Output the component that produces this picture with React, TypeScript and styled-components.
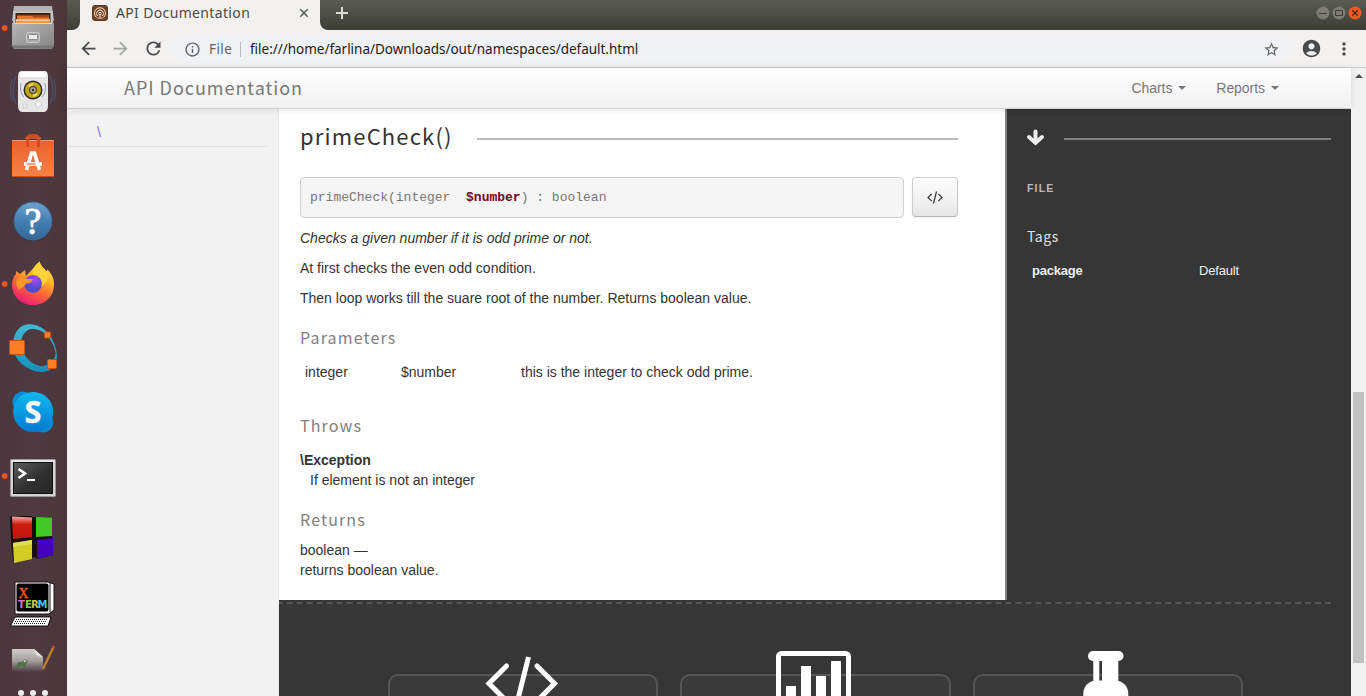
import React from 'react';
import styled, { createGlobalStyle } from 'styled-components';
import {
  MdArrowBack,
  MdArrowForward,
  MdRefresh,
  MdInfoOutline,
  MdStarBorder,
  MdAccountCircle,
  MdMoreVert,
} from 'react-icons/md';

const sans = `'Liberation Sans', Arial, sans-serif`;
const heading = `'Noto Sans CJK SC', 'Noto Sans', sans-serif`;
const chrome = `'Noto Sans', 'Open Sans', sans-serif`;

const GlobalStyle = createGlobalStyle`
  * { box-sizing: border-box; }
  body { margin: 0; font: 14px/20px ${sans}; color: #333; overflow: hidden; }
  h1, h3, h4, h5, p, pre, dl, dd { margin: 0; font-weight: normal; }
  svg { display: block; flex: none; }
`;

const Desktop = styled.div`
  display: flex;
  width: 1366px;
  height: 696px;
  overflow: hidden;
`;

/* ---------- launcher ---------- */

const Dock = styled.aside`
  width: 67px;
  flex: none;
  height: 696px;
  overflow: hidden;
  background: linear-gradient(90deg, #4a363c, #4e3a40 50%, #4b353b);
`;

const DockList = styled.div`
  display: flex;
  flex-direction: column;
  margin-top: -4px;
`;

const DockSlot = ({ index, running, children }: { index: number; running?: boolean; children: React.ReactNode }) => (
  <svg width="67" height="64" viewBox={`0 ${index * 64 - 4} 67 64`}>
    {running && <circle cx="4.700" cy={index * 64 + 28} r="2.900" fill="#e95420" />}
    {children}
  </svg>
);

const Launcher = () => (
  <Dock>
    <DockList>
      <DockSlot index={0} running>
        <defs>
          <linearGradient id="cab" x1="0" y1="0" x2="1" y2="1">
            <stop offset="0" stopColor="#b5b5b5" />
            <stop offset="1" stopColor="#858585" />
          </linearGradient>
        </defs>
        <path d="M14 6h38l2 15H12z" fill="#b3b3b3" />
        <path d="M13 11h40v14H13z" fill="#c3c3c3" />
        <path d="M15.500 13h35v12h-35z" fill="#3c2416" />
        <path d="M17 15h32v10H17z" fill="#a44717" />
        <path d="M17 16h15l2 1.500h15V19H17z" fill="#e07a30" />
        <path d="M16 19.500h34V23H16z" fill="#f29a4a" />
        <path d="M16 19.500h34v1H16z" fill="#fff0cf" />
        <path d="M12 23h42v23l-2 3H14l-2-3z" fill="url(#cab)" />
        <path d="M14 23h38v1H14z" fill="#ddd" />
        <path d="M12 45.500h42l-2 3H14z" fill="#777" />
        <rect x="26.500" y="32.500" width="13" height="10" rx="2" fill="#aaa" stroke="#c8c8c8" />
        <rect x="28.500" y="34.500" width="9" height="5" rx="1" fill="#eee" stroke="#888" />
      </DockSlot>
      <DockSlot index={1}>
        <path d="M16 76q-6 15 0 28M12.500 79q-4 12 0 22M50 76q6 15 0 28M53.500 79q4 12 0 22" stroke="#4f5f86" fill="none" strokeWidth="1.300" opacity=".6" />
        <path d="M21 71h24q3 0 3 6v28q0 7-4 7H22q-4 0-4-7V77q0-6 3-6z" fill="#e5e5e5" />
        <path d="M22 72h22q2 0 2 5H20q0-5 2-5z" fill="#fff" />
        <circle cx="33" cy="90" r="9.500" fill="#2e2b2a" />
        <circle cx="33" cy="90" r="8" fill="#c0a516" />
        <path d="M28 86a7 7 0 0 1 5-3v7zM38 94a7 7 0 0 1-5 3v-7z" fill="#efdc5c" />
        <circle cx="33" cy="90" r="4.200" fill="#5a4c23" />
        <circle cx="33" cy="90" r="2.800" fill="#a9a9a3" />
        <circle cx="33" cy="90" r="1.200" fill="#333" />
        <path d="M21 83q-2 9 3 14M45 83q2 9-3 14" stroke="#6b83ac" fill="none" opacity=".7" />
        <circle cx="38.500" cy="104" r="3" fill="#fafafa" stroke="#bbb" strokeWidth=".7" />
        <path d="M23 104h4v4h-4z" fill="none" stroke="#d2d2d2" />
      </DockSlot>
      <DockSlot index={2}>
        <defs>
          <linearGradient id="bag" x1="0" y1="0" x2="0" y2="1">
            <stop offset="0" stopColor="#ea6030" />
            <stop offset="1" stopColor="#f58245" />
          </linearGradient>
        </defs>
        <path d="M12 140h42v37H12z" fill="url(#bag)" />
        <path d="M12 140h42v1H12z" fill="#f69367" />
        <path d="M12 176h42v1H12z" fill="#c94c20" />
        <path d="M27.500 147v-8q0-3.500 4-3.500h3q4 0 4 3.500v8" stroke="#d2491c" strokeWidth="2.800" fill="none" />
        <path d="M25 138h16" stroke="#e25a2c" strokeWidth="1.500" />
        <path d="M26.500 170l5-17h3l5 17" stroke="#fff" strokeWidth="3.600" fill="none" />
        <path d="M24 164h18" stroke="#fff" strokeWidth="3.600" />
        <path d="M26.500 164h9" stroke="#e9642f" strokeWidth="1.200" />
      </DockSlot>
      <DockSlot index={3}>
        <defs>
          <linearGradient id="help" x1="0" y1="0" x2="0" y2="1">
            <stop offset="0" stopColor="#6fa3cd" />
            <stop offset=".5" stopColor="#4580b2" />
            <stop offset="1" stopColor="#336799" />
          </linearGradient>
        </defs>
        <circle cx="33" cy="222" r="19.500" fill="#352a30" opacity=".5" />
        <circle cx="33" cy="221" r="19" fill="url(#help)" stroke="#376b9b" />
        <text x="33" y="234" fontFamily="Liberation Serif, serif" fontSize="38" textAnchor="middle" fill="#fff" stroke="#fff" strokeWidth=".8">?</text>
      </DockSlot>
      <DockSlot index={4} running>
        <defs>
          <linearGradient id="fox" x1=".8" y1="0" x2=".3" y2="1">
            <stop offset="0" stopColor="#fff044" />
            <stop offset=".35" stopColor="#ffb32c" />
            <stop offset=".65" stopColor="#ff5f38" />
            <stop offset="1" stopColor="#e8177b" />
          </linearGradient>
          <radialGradient id="orb" cx=".6" cy=".25">
            <stop offset="0" stopColor="#a849f2" />
            <stop offset="1" stopColor="#514ccc" />
          </radialGradient>
        </defs>
        <path d="M39.500 261.500c1 5 5 6 7 10l1-2c5 5 7 11 6.500 16A21 20 0 0 1 12 285c0-5 2-9 4-11v-3l4 3 5-4 1 6z" fill="url(#fox)" />
        <circle cx="33" cy="284" r="9" fill="url(#orb)" />
        <path d="M17 279q4-2 7-1l4 1h5l-1 2q-2 3-5 2l-4 4-4 3q-4-5-2-11z" fill="#ff9727" />
        <path d="M39.500 261.500q-8 6-6.500 13c7 0 10 6 8.500 12q9-6 5-15-5-4-7-10z" fill="#ffd43b" />
      </DockSlot>
      <DockSlot index={5}>
        <defs>
          <linearGradient id="ring" x1="0" y1="0" x2="0" y2="1">
            <stop offset="0" stopColor="#43b8d4" />
            <stop offset="1" stopColor="#1590bd" />
          </linearGradient>
        </defs>
        <path fillRule="evenodd" d="M13 346C13 330 22 323 32 324.500 48 326 57 344 57 357 56 368 49 372 41 372 27 371 13 360 13 346zM21.500 346C23 357 33 366 42 366 51 365 56 359 55.500 352 53 340 45 330 34 329 26 328 20 336 21.500 346z" fill="url(#ring)" />
        <rect x="9.500" y="340.500" width="15" height="14" rx="1" fill="#ff7e26" stroke="#c95114" />
        <rect x="44.500" y="332" width="6" height="6" rx="1" fill="#ff7e26" stroke="#c95114" />
        <rect x="47.500" y="359.500" width="9" height="9" rx="1" fill="#ff7e26" stroke="#c95114" />
      </DockSlot>
      <DockSlot index={6}>
        <defs>
          <linearGradient id="sky" x1="0" y1="0" x2="0" y2="1">
            <stop offset="0" stopColor="#10b9f2" />
            <stop offset="1" stopColor="#0479d0" />
          </linearGradient>
        </defs>
        <circle cx="23" cy="402" r="10.500" fill="#078fd0" />
        <circle cx="43" cy="422" r="10.500" fill="#0a88cc" />
        <circle cx="33.200" cy="412" r="20" fill="url(#sky)" />
        <text x="33" y="423" fontFamily="Open Sans, sans-serif" fontWeight="bold" fontSize="30" textAnchor="middle" fill="#fff" stroke="#fff" strokeWidth=".5">S</text>
      </DockSlot>
      <DockSlot index={7} running>
        <defs>
          <linearGradient id="term" x1="0" y1="0" x2="1" y2="1">
            <stop offset="0" stopColor="#5c5c5c" />
            <stop offset=".55" stopColor="#303030" />
            <stop offset="1" stopColor="#262626" />
          </linearGradient>
        </defs>
        <rect x="10.500" y="459.500" width="45" height="37" rx="1" fill="#d2d2d2" stroke="#999" />
        <rect x="11.500" y="460.500" width="43" height="1" fill="#fff" />
        <rect x="13.500" y="462.500" width="39" height="31" fill="url(#term)" stroke="#111" />
        <path d="M18.500 469l6.500 4.500-6.500 4.500" fill="none" stroke="#fff" strokeWidth="2.600" />
        <path d="M27 480h8" stroke="#fff" strokeWidth="2" />
      </DockSlot>
      <DockSlot index={8}>
        <defs>
          <linearGradient id="red" x1="0" y1="0" x2="0" y2="1">
            <stop offset="0" stopColor="#f3aaa0" />
            <stop offset=".35" stopColor="#cf1c10" />
            <stop offset="1" stopColor="#c4150d" />
          </linearGradient>
        </defs>
        <path d="M10 517l2-1h20v1h20v20h1v18l-16 4-2-2-22 5-2-24z" fill="#15100f" />
        <path d="M12 516.500l20 1V537l-19 2z" fill="url(#red)" />
        <path d="M36 517l16 .5V536l-16 1z" fill="#43c925" />
        <path d="M13 543l19-3v19l-18 4z" fill="#d2cd25" />
        <path d="M37 540l16-2v17l-16 4z" fill="#4501bb" />
        <path d="M13 543l19-3v4l-19 3z" fill="#e1dd54" />
      </DockSlot>
      <DockSlot index={9}>
        <path d="M15 582h33l6 2v26l-5 4H15z" fill="#fff" stroke="#111" />
        <path d="M50 583v29" stroke="#111" strokeWidth="1" />
        <rect x="16.500" y="583.500" width="32" height="28" rx="2" fill="#000" />
        <text x="18.500" y="597.500" fontFamily="Liberation Serif, serif" fontSize="15" fill="#ff5a1e" stroke="#ff5a1e" strokeWidth=".4" textLength="10" lengthAdjust="spacingAndGlyphs">X</text>
        <text y="608" fontFamily="DejaVu Sans, sans-serif" fontWeight="bold" fontSize="10">
          <tspan x="18" fill="#da71c9">T</tspan>
          <tspan x="25" fill="#83d341">E</tspan>
          <tspan x="31" fill="#d5bb3f">R</tspan>
          <tspan x="37.500" fill="#48c5e8">M</tspan>
        </text>
        <path d="M15 617h36l-3 9H10.500z" fill="#fff" stroke="#111" />
        <path d="M16 619.500h31M15 621.500h31M14 623.500h31" stroke="#222" strokeDasharray="1 1" />
      </DockSlot>
      <DockSlot index={10}>
        <defs>
          <linearGradient id="paper" x1="0" y1="0" x2="0" y2="1">
            <stop offset="0" stopColor="#d0ceca" />
            <stop offset=".5" stopColor="#a7a09f" />
            <stop offset="1" stopColor="#4d3a40" />
          </linearGradient>
        </defs>
        <path d="M12 649h22l9 8v15H12z" fill="url(#paper)" />
        <path d="M34 649q1 8 9 8z" fill="#e4e4e4" />
        <path d="M16 667q1-6 7-5l2-3 3 2-3 5 3 1h-3l-5-1-2 2z" fill="#4c7449" />
        <circle cx="25" cy="661" r="1.400" fill="#ddd" stroke="#555" strokeWidth=".5" />
        <path d="M43 669l10-21" stroke="#bd802b" strokeWidth="2.300" />
        <path d="M53 648l1-2" stroke="#ce4b4f" strokeWidth="2.500" />
        <g fill="#eee">
          <circle cx="21" cy="693" r="3" />
          <circle cx="33" cy="693" r="3" />
          <circle cx="45" cy="693" r="3" />
        </g>
      </DockSlot>
    </DockList>
  </Dock>
);

/* ---------- browser chrome ---------- */

const Browser = styled.div`
  width: 1299px;
  display: flex;
  flex-direction: column;
`;

const TabStrip = styled.div`
  display: flex;
  height: 30px;
  flex: none;
  background: #f2f1f0;
`;

const StripFill = styled.div<{ $side: 'left' | 'right' }>`
  display: flex;
  align-items: center;
  ${p => (p.$side === 'left' ? 'width: 13px; border-radius: 0 0 8px 0;' : 'flex: 1; border-radius: 0 0 0 8px;')}
  background: linear-gradient(#5a5b52, #3d3d37);
  padding: ${p => (p.$side === 'left' ? '0' : '0 4px 4px 15px')};
`;

const Tab = styled.div`
  display: flex;
  align-items: center;
  width: 240px;
  padding: 0 11px 4px 12px;
  font: 14px/20px ${chrome};
  color: #4a4a4a;
`;

const TabTitle = styled.span`
  margin-left: 8px;
  flex: 1;
  white-space: nowrap;
  letter-spacing: 0.35px;
`;

const WindowButtons = styled.div`
  display: flex;
  gap: 2px;
  margin-left: auto;
`;

const Toolbar = styled.div`
  display: flex;
  align-items: center;
  height: 38px;
  flex: none;
  padding: 0 11px 0 11px;
  background: #f2f1f0;
  border-bottom: 1px solid #cbcac8;
  color: #4d4d4d;
`;

const ToolIcon = styled.span<{ $gap?: number; $faded?: boolean }>`
  display: flex;
  margin-left: ${p => p.$gap ?? 0}px;
  color: ${p => (p.$faded ? '#a5a5a4' : '#4a4a4a')};
`;

const Omnibox = styled.div`
  display: flex;
  align-items: center;
  width: 1116px;
  height: 28px;
  margin-left: 10px;
  padding: 1px 10px 0 10px;
  border-radius: 14px;
  background: #f0f1f4;
  font: 13.5px/20px ${chrome};
  color: #5f6368;
`;

const Scheme = styled.span`
  margin-left: 8px;
  padding-right: 7px;
  width: 32px;
  line-height: 15px;
  letter-spacing: 0.4px;
  border-right: 1px solid #b9bbbe;
`;

const Url = styled.span`
  margin-left: 9px;
  flex: 1;
  color: #1c1b22;
  white-space: nowrap;
  letter-spacing: -0.02px;
`;

const Favicon = () => (
  <svg width="16" height="16" viewBox="0 0 16 16">
    <rect x=".5" y=".5" width="15" height="15" rx="2.500" fill="#774521" stroke="#5c3418" />
    <g fill="none" stroke="#f1e3d3" strokeWidth="1">
      <path d="M4.500 12.500A5.500 5.500 0 1 1 11.500 12.500M5.500 11A3.500 3.500 0 1 1 10.500 11" />
      <circle cx="8" cy="8.500" r="1.300" />
      <path d="M8 10v2M5.500 13h5" />
    </g>
  </svg>
);

/* ---------- documentation page ---------- */

const Viewport = styled.div`
  display: flex;
  height: 628px;
`;

const Page = styled.div`
  width: 1284px;
  display: flex;
  flex-direction: column;
`;

const NavBar = styled.header`
  display: flex;
  align-items: center;
  height: 41px;
  flex: none;
  padding: 0 72px 0 57px;
  background: linear-gradient(#fff, #f0f0f0);
  border-bottom: 1px solid #d0d0d0;
  box-shadow: 0 1px 8px rgba(0, 0, 0, 0.1);
  position: relative;
  z-index: 1;
  color: #777;
`;

const Brand = styled.h1`
  flex: 1;
  font: 18px/38px ${heading};
  height: 40px;
  letter-spacing: 0.97px;
`;

const NavItem = styled.span`
  display: flex;
  align-items: center;
  gap: 6px;
  margin-left: 30px;
  letter-spacing: -0.05px;
`;

const Caret = styled.i`
  border: 4px solid transparent;
  border-top-color: #777;
  border-bottom: 0;
`;

const Body = styled.div`
  display: flex;
  flex: 1;
  min-height: 0;
`;

const SideNav = styled.nav`
  width: 212px;
  flex: none;
  background: #f2f2f2;
  border-right: 1px solid #e8e8e8;
`;

const SideLink = styled.div`
  width: 201px;
  height: 38px;
  padding: 13px 0 0 30px;
  border-bottom: 1px solid #e2e2e2;
  color: #7d6cf0;
  font-size: 14px;
  line-height: 20px;
`;

const Content = styled.div`
  flex: 1;
  min-width: 0;
  display: flex;
  flex-direction: column;
`;

const Columns = styled.div`
  display: flex;
  height: 491px;
  flex: none;
`;

const Article = styled.main`
  width: 726px;
  padding: 14px 47px 0 21px;
  background: #fff;
`;

const RuleRow = styled.div<{ $gap: number }>`
  display: flex;
  align-items: center;
  gap: ${p => p.$gap}px;
  height: 32px;
`;

const Rule = styled.div<{ $color: string }>`
  flex: 1;
  height: 2px;
  background: ${p => p.$color};
`;

const MethodName = styled.h3`
  width: 152px;
  white-space: nowrap;
  font: 22px/28px ${heading};
  letter-spacing: 1.17px;
  margin-top: -8px;
`;

const SignatureRow = styled.div`
  display: flex;
  gap: 8px;
  align-items: flex-start;
  margin: 22px 0 10px;
`;

const Signature = styled.pre`
  flex: 1;
  height: 41px;
  padding: 0 9px;
  border: 1px solid #d0d0d0;
  border-radius: 4px;
  background: #f5f5f5;
  font: 13px/39px 'Liberation Mono', monospace;
  color: #777;
  b { color: #800020; }
`;

const CodeButton = styled.button`
  display: flex;
  align-items: center;
  justify-content: center;
  width: 46px;
  height: 40px;
  padding: 0;
  border: 1px solid #ccc;
  border-bottom-color: #b3b3b3;
  border-radius: 4px;
  background: linear-gradient(#fff, #e6e6e6);
  box-shadow: 0 1px 2px rgba(0, 0, 0, 0.05);
`;

const Paragraph = styled.p<{ $italic?: boolean }>`
  margin-bottom: 10px;
  font-style: ${p => (p.$italic ? 'italic' : 'normal')};
`;

const SectionTitle = styled.h4<{ $top: number }>`
  margin-top: ${p => p.$top}px;
  height: 20px;
  font: 16px/18px ${heading};
  letter-spacing: 1.15px;
  color: #808080;
`;

const ParamRow = styled.div`
  display: grid;
  grid-template-columns: 96px 120px 1fr;
  margin-top: 14px;
  padding-left: 5px;
`;

const Block = styled.div<{ $top: number }>`
  margin-top: ${p => p.$top}px;
`;

const Indented = styled.div`
  padding-left: 10px;
`;

const Details = styled.aside`
  flex: 1;
  padding: 14px 20px 0 20px;
  border-left: 2px solid #808080;
  background: #363636;
  color: #eee;
  font-size: 13px;
`;

const DownArrow = styled.svg`
  margin-top: -4px;
`;

const FileLabel = styled.h5`
  margin-top: 23px;
  font: bold 10.5px/20px ${sans};
  letter-spacing: 1.2px;
  color: #bbb;
`;

const TagsTitle = styled.h4`
  margin: 29px 0 14px;
  height: 20px;
  font: 14px/18px ${heading};
  letter-spacing: 0.6px;
  color: #e0e0e0;
`;

const TagRow = styled.div`
  display: grid;
  grid-template-columns: 167px 1fr;
  padding-left: 5px;
  letter-spacing: -0.2px;
`;

const Footer = styled.footer`
  flex: 1;
  min-height: 0;
  overflow: hidden;
  padding-top: 2px;
  background: #363636;
`;

const FooterInner = styled.div`
  margin: 0 20px 0 -192px;
  height: 110px;
  border-top: 2px dashed #565656;
  display: flex;
  justify-content: flex-start;
  gap: 22px;
  padding: 70px 0 0 301px;
`;

const Card = styled.div`
  display: flex;
  justify-content: center;
  width: 270.4px;
  flex: none;
  height: 100px;
  border: 2px solid #565656;
  border-radius: 10px;
  background: #3a3a3a;
`;

const CardIcon = styled.svg`
  margin: -27px 4px 0 0;
  overflow: visible;
`;

const ScrollTrack = styled.div`
  display: flex;
  flex-direction: column;
  align-items: center;
  width: 15px;
  background: #f1f1f1;
`;

const ScrollUp = styled.i`
  margin: 6px 0 314px;
  border: 4px solid transparent;
  border-bottom-color: #505050;
  border-top: 0;
`;

const ScrollThumb = styled.div`
  width: 11px;
  height: 271px;
  background: #c1c1c1;
`;

export default function App() {
  return (
    <Desktop>
      <GlobalStyle />
      <Launcher />
      <Browser>
        <TabStrip>
          <StripFill $side="left" />
          <Tab>
            <Favicon />
            <TabTitle>API Documentation</TabTitle>
            <svg width="10" height="10" viewBox="0 0 10 10" stroke="#555" strokeWidth="1.500">
              <path d="M1.300 1.300l7.400 7.400M8.700 1.300L1.300 8.700" />
            </svg>
          </Tab>
          <StripFill $side="right">
            <svg width="14" height="14" viewBox="0 0 14 14" stroke="#deddd8" strokeWidth="2">
              <path d="M7 1v12M1 7h12" />
            </svg>
            <WindowButtons>
              <svg width="14" height="14" viewBox="0 0 14 14">
                <circle cx="7" cy="7" r="6.500" fill="#7d7c76" />
                <path d="M3 7.500h8" stroke="#3d3c38" />
              </svg>
              <svg width="14" height="14" viewBox="0 0 14 14">
                <circle cx="7" cy="7" r="6.500" fill="#7d7c76" />
                <path d="M3.500 4.500h7v5h-7z" stroke="#3d3c38" fill="none" />
              </svg>
              <svg width="14" height="14" viewBox="0 0 14 14">
                <circle cx="7" cy="7" r="6.500" fill="#ee5a20" />
                <path d="M4.300 4.300l5.400 5.400M9.700 4.300L4.300 9.700" stroke="#4a2a1c" strokeWidth="1.300" />
              </svg>
            </WindowButtons>
          </StripFill>
        </TabStrip>
        <Toolbar>
          <ToolIcon><MdArrowBack size={21} /></ToolIcon>
          <ToolIcon $gap={11} $faded><MdArrowForward size={21} /></ToolIcon>
          <ToolIcon $gap={12}><MdRefresh size={21} /></ToolIcon>
          <Omnibox>
            <MdInfoOutline size={17} />
            <Scheme>File</Scheme>
            <Url>file:///home/farlina/Downloads/out/namespaces/default.html</Url>
            <MdStarBorder size={17} />
          </Omnibox>
          <ToolIcon $gap={11}><MdAccountCircle size={21} /></ToolIcon>
          <ToolIcon $gap={12}><MdMoreVert size={20} /></ToolIcon>
        </Toolbar>
        <Viewport>
          <Page>
            <NavBar>
              <Brand>API Documentation</Brand>
              <NavItem>Charts<Caret /></NavItem>
              <NavItem>Reports<Caret /></NavItem>
            </NavBar>
            <Body>
              <SideNav>
                <SideLink>\</SideLink>
              </SideNav>
              <Content>
                <Columns>
                  <Article>
                    <RuleRow $gap={25}>
                      <MethodName>primeCheck()</MethodName>
                      <Rule $color="#bbb" />
                    </RuleRow>
                    <SignatureRow>
                      <Signature>primeCheck(integer{'  '}<b>$number</b>) : boolean</Signature>
                      <CodeButton>
                        <svg width="16" height="13" viewBox="0 0 16 13" fill="none" stroke="#333" strokeWidth="1.200">
                          <path d="M4.700 2.800L1 6.500l3.700 3.700M11.300 2.800L15 6.500l-3.700 3.700M9.500 .5L6.500 12.500" />
                        </svg>
                      </CodeButton>
                    </SignatureRow>
                    <Paragraph $italic>Checks a given number if it is odd prime or not.</Paragraph>
                    <Paragraph>At first checks the even odd condition.</Paragraph>
                    <Paragraph>Then loop works till the suare root of the number. Returns boolean value.</Paragraph>
                    <SectionTitle $top={20}>Parameters</SectionTitle>
                    <ParamRow>
                      <span>integer</span>
                      <span>$number</span>
                      <span>this is the integer to check odd prime.</span>
                    </ParamRow>
                    <SectionTitle $top={34}>Throws</SectionTitle>
                    <Block $top={14}>
                      <b>\Exception</b>
                      <Indented>If element is not an integer</Indented>
                    </Block>
                    <SectionTitle $top={20}>Returns</SectionTitle>
                    <Block $top={10}>
                      boolean —<br />
                      returns boolean value.
                    </Block>
                  </Article>
                  <Details>
                    <RuleRow $gap={20}>
                      <DownArrow width="17" height="17" viewBox="0 0 17 17" fill="none" stroke="#eee">
                        <path d="M8.500 2.500v10" strokeWidth="4" strokeLinecap="round" />
                        <path d="M2 8l6.500 6L15 8" strokeWidth="3.800" strokeLinecap="round" />
                      </DownArrow>
                      <Rule $color="#808080" />
                    </RuleRow>
                    <FileLabel>FILE</FileLabel>
                    <TagsTitle>Tags</TagsTitle>
                    <TagRow>
                      <b>package</b>
                      <span>Default</span>
                    </TagRow>
                  </Details>
                </Columns>
                <Footer>
                  <FooterInner>
                    <Card>
                      <CardIcon width="75" height="75" viewBox="0 0 75 75" fill="none" stroke="#fff" strokeWidth="5">
                        <path d="M22.500 17L5 34.500l17.500 17.500M53 17l17.500 17.500L53 52" strokeLinecap="round" />
                        <path d="M44.500 8L31 62" />
                      </CardIcon>
                    </Card>
                    <Card>
                      <CardIcon width="75" height="75" viewBox="0 0 75 75" fill="#fff">
                        <rect x="2.500" y="4.500" width="70" height="70" rx="3" fill="none" stroke="#fff" strokeWidth="5" />
                        <path d="M10 37h10v40H10zM25 17h10v60H25zM40 27h10v50H40zM55 12h10v65H55z" />
                      </CardIcon>
                    </Card>
                    <Card>
                      <CardIcon width="75" height="75" viewBox="0 0 75 75" fill="#fff">
                        <rect x="20" y="2" width="35.500" height="10" rx="5" />
                        <path d="M25.300 10h6v24h-6zM34 10h16.300v24H34z" />
                        <rect x="15.300" y="31.500" width="45" height="40" rx="13" />
                      </CardIcon>
                    </Card>
                  </FooterInner>
                </Footer>
              </Content>
            </Body>
          </Page>
          <ScrollTrack>
            <ScrollUp />
            <ScrollThumb />
          </ScrollTrack>
        </Viewport>
      </Browser>
    </Desktop>
  );
}
